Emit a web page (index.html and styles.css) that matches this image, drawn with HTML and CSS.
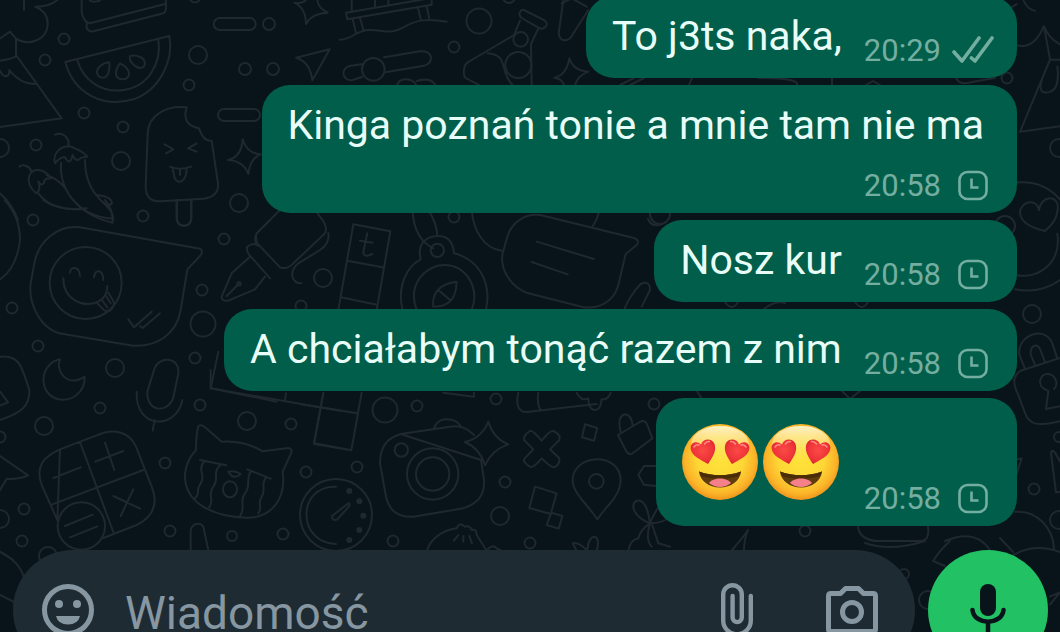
FILE: index.html
```html
<!DOCTYPE html>
<html lang="pl">
<head>
 <meta charset="utf-8">
 <meta name="viewport" content="width=device-width, initial-scale=1">
 <title>Czat</title>
 <link rel="stylesheet" href="styles.css">
</head>
<body>
<svg class="symbols" aria-hidden="true">
  <defs>
	<radialGradient id="face" cx="50%" cy="46%" r="54%">
	  <stop offset="0" stop-color="#ffe23a"/>
	  <stop offset="0.55" stop-color="#fdd835"/>
	  <stop offset="0.85" stop-color="#fbb429"/>
	  <stop offset="1" stop-color="#ee941c"/>
	</radialGradient>
	<linearGradient id="shine" x1="0" y1="0" x2="0" y2="1">
	  <stop offset="0" stop-color="#fff3c8"/>
	  <stop offset="1" stop-color="#ffe680" stop-opacity="0"/>
	</linearGradient>
	<radialGradient id="heart-fill" cx="50%" cy="45%" r="60%">
	  <stop offset="0" stop-color="#fb4a46"/>
	  <stop offset="0.7" stop-color="#ee3338"/>
	  <stop offset="1" stop-color="#cf2430"/>
	</radialGradient>
  </defs>
  <symbol id="clock" viewBox="0 0 42 42">
	<rect x="7.500" y="7" width="27" height="27" rx="8" fill="none" stroke="currentColor" stroke-width="2.600"/>
	<path d="M19.500 13.500v9H26.500" fill="none" stroke="currentColor" stroke-width="2.600"/>
  </symbol>
  <symbol id="ticks" viewBox="0 0 42 42">
	<path d="M2 22l8 9L27 8M19.500 28l3.500 3L40 8" fill="none" stroke="currentColor" stroke-width="3.600" stroke-linejoin="round" stroke-linecap="round"/>
  </symbol>
  <symbol id="heart" viewBox="0 0 26 26">
	<path d="M18 25C11 21 2 17 .8 10.500C-.5 4 6 .5 11 5.500C13 -1 22 -1 24.500 5C27 12 22 19 18 25Z" fill="url(#heart-fill)"/>
	<path d="M4 8q2-3 5-2M14.500 5q2-3 5-2.500" fill="none" stroke="#ff8f85" stroke-width="1.500" stroke-linecap="round"/>
  </symbol>
  <symbol id="heart-eyes" viewBox="0 0 76 76">
	<circle cx="38" cy="38" r="38" fill="url(#face)"/>
	<ellipse cx="38" cy="20" rx="29" ry="18" fill="url(#shine)"/>
	<use href="#heart" x="8" y="15" width="26" height="26"/>
	<use href="#heart" width="26" height="26" transform="translate(68 15) scale(-1 1)"/>
	<path d="M17 47.500Q38 55 59 47.500C58 57 49 63.500 38 63.500S18 57 17 47.500Z" fill="#5f3c0c"/>
	<path d="M17 47.500Q38 55 59 47.500Q58 51 56 52.500Q38 57 20 52.500Q18 51 17 47.500Z" fill="#4a2c06"/>
	<path d="M27 59C31 53 45 53 49 59Q44 63 38 63T27 59Z" fill="#f5808a"/>
  </symbol>
</svg>

<svg class="wallpaper" viewBox="0 0 1060 632" preserveAspectRatio="xMinYMin slice" aria-hidden="true">
  <!-- bubbles scattered between the drawings -->
  <g>
	<circle cx="64" cy="39" r="5.500"/><circle cx="45" cy="60" r="5.500"/><circle cx="84" cy="113" r="5.500"/>
	<circle cx="123" cy="127" r="5.500"/><circle cx="36" cy="145" r="5.500"/><circle cx="189" cy="85" r="5.500"/>
	<circle cx="245" cy="69" r="6"/><circle cx="269" cy="24" r="6"/><circle cx="273" cy="69" r="6"/>
	<circle cx="143" cy="216" r="5.500"/><circle cx="33" cy="220" r="5.500"/><circle cx="195" cy="-3" r="5.500"/>
	<circle cx="121" cy="161" r="9"/><circle cx="198" cy="55" r="9"/><circle cx="239" cy="203" r="9"/><circle cx="0" cy="148" r="9"/>
	<circle cx="479" cy="21" r="12.500"/><circle cx="454" cy="47" r="5.500"/><circle cx="509" cy="-3" r="6"/>
	<circle cx="12" cy="308" r="5.500"/><circle cx="38" cy="346" r="5.500"/><circle cx="115" cy="368" r="9"/>
	<circle cx="195" cy="358" r="5.500"/><circle cx="203" cy="324" r="12.500"/><circle cx="202" cy="290" r="5.500"/>
	<circle cx="224" cy="239" r="5.500"/><circle cx="323" cy="278" r="9"/><circle cx="301" cy="306" r="5.500"/>
	<circle cx="454" cy="217" r="5.500"/><circle cx="660" cy="214" r="10"/>
	<circle cx="100" cy="408" r="5.500"/><circle cx="44" cy="426" r="9"/><circle cx="200" cy="405" r="5.500"/>
	<circle cx="247" cy="421" r="9"/><circle cx="291" cy="424" r="5.500"/><circle cx="165" cy="463" r="5.500"/>
	<circle cx="306" cy="472" r="5.500"/><circle cx="24" cy="509" r="5.500"/><circle cx="22" cy="541" r="5.500"/>
	<circle cx="0" cy="519" r="9"/><circle cx="0" cy="437" r="5.500"/><circle cx="170" cy="531" r="5.500"/>
	<circle cx="232" cy="536" r="5"/><circle cx="283" cy="534" r="5.500"/><circle cx="48" cy="556" r="9"/>
	<circle cx="385" cy="410" r="12.500"/><circle cx="417" cy="406" r="5.500"/><circle cx="357" cy="467" r="5.500"/>
	<circle cx="505" cy="482" r="5.500"/><circle cx="500" cy="516" r="9"/><circle cx="393" cy="541" r="5.500"/>
	<circle cx="496" cy="399" r="5.500"/><circle cx="654" cy="404" r="5.500"/><circle cx="530" cy="543" r="5.500"/>
	<circle cx="1007" cy="78" r="5.500"/><circle cx="1059" cy="148" r="9"/><circle cx="1005" cy="226" r="10"/>
	<circle cx="1032" cy="314" r="9"/><circle cx="1034" cy="489" r="5.500"/><circle cx="1059" cy="437" r="5"/>
	<circle cx="1059" cy="520" r="9"/><circle cx="805" cy="531" r="5.500"/><circle cx="904" cy="574" r="5"/><circle cx="928" cy="600" r="9"/>
  </g>
  <!-- cake, melon, mountain, chillies, ice lolly -->
  <g transform="scale(.33333)">
	<path d="M72 30V0M172 0Q150 20 105 20Q145 35 143 75C140 120 85 140 48 116V165L185 355L0 381M48 116L30 95L0 115M48 170Q25 180 0 182M0 212Q10 232 20 228Q30 225 28 210Q60 252 105 252"/>
	<path d="M245 0V35Q250 68 270 70L495 12Q500 8 497 0M260 68V84Q266 96 280 94L490 40Q500 36 498 12M270 2Q280 8 300 2"/>
	<path d="M196 186L508 108C522 180 480 270 400 298C310 325 220 280 196 186ZM232 180C250 245 310 280 370 270C440 262 486 195 475 118"/>
	<path d="M328 187C330 210 325 232 310 233C290 233 285 213 300 199Q312 188 328 187ZM360 190C382 200 392 218 385 230C376 242 352 240 348 224Q346 208 360 190ZM390 168C385 185 410 208 426 203C440 196 437 178 420 171Q405 164 390 168Z"/>
	<rect x="641" y="54" width="126" height="36" rx="18"/><rect x="654" y="327" width="126" height="36" rx="18"/>
	<path d="M165 404C190 394 210 415 205 440M165 490C155 460 190 425 225 445Q250 455 262 470Q245 470 238 478Q225 485 218 465Q210 500 195 472Q182 468 165 490ZM183 488C178 560 225 650 340 656C340 610 255 600 255 480M58 500C70 490 90 500 95 515M108 580C70 545 85 500 125 512Q145 520 152 535Q132 535 132 548Q125 560 115 545Q125 570 108 580ZM115 580C145 620 200 635 260 625M140 525Q180 540 200 570M290 585Q340 590 335 612Q320 620 308 605"/>
	<path d="M560 322C500 315 445 345 443 400L437 560Q437 604 480 604L610 596Q658 590 654 550L635 422Q610 425 597 385Q555 378 556 340ZM494 433L520 448L498 460M590 430L564 445L590 455M510 500Q540 512 574 500M518 506L524 535C535 555 560 545 560 505M540 508V525M530 604V655Q532 677 552 677T574 655V600"/>
	<path d="M728 418Q740 460 782 463Q750 475 745 522Q730 482 684 480Q725 470 728 418Z"/>
	<path d="M0 580Q35 610 54 660"/>
  </g>
  <!-- pier, paper plane, slider, flask -->
  <g transform="translate(260 0) scale(.33333)">
	<path d="M103 8Q125 12 138 0M103 8Q138 25 138 72Q155 40 203 38Q175 25 172 0M108 173L209 148L157 241Q150 185 108 173Z"/>
	<path d="M258 38L515 -6V14L262 58ZM275 0V32M345 0V20M385 0V12M278 57L288 98M300 53L311 92M474 24L482 57M500 18L508 57M240 119C280 118 285 90 330 90S390 105 430 82S500 55 560 65"/>
	<path d="M372 172L480 154C518 148 525 190 492 197L376 217M306 231L278 240C245 245 240 202 272 197L310 192"/>
	<circle cx="340" cy="208" r="34"/>
	<path d="M410 260Q415 236 440 238T470 260M470 243Q515 230 528 258"/>
	<path d="M792 30L855 62C870 75 850 92 835 83L785 54C770 42 785 25 792 30ZM780 62L762 105L625 186C608 195 608 230 620 236L660 256M835 86L813 132L815 260M683 160C750 165 715 215 760 258"/>
	<circle cx="782" cy="118" r="22"/><circle cx="775" cy="195" r="39"/>
	<path d="M910 0L896 100C900 128 925 125 935 108L985 30M905 10L935 -5L980 20M928 175Q940 212 985 215Q950 228 944 260M928 175Q920 225 883 233Q905 235 912 255"/>
  </g>
  <!-- speech bubble with a grinning face -->
  <g transform="translate(0 200) scale(.33333)">
	<path d="M240 82L600 146Q612 152 600 168L562 208L542 330C530 400 475 440 400 437L190 402C120 390 85 310 92 250L103 190C115 125 170 75 240 82Z"/>
	<circle cx="257" cy="249" r="108"/>
	<path d="M210 218Q212 202 225 204T240 228M282 232Q285 212 297 214T310 240M190 235C190 300 250 325 295 305Q322 290 322 258M290 308L312 330C330 345 350 315 338 300L325 278M306 300L322 322M318 288L332 310M385 358L402 382L455 335M420 378L428 384L480 340"/>
	<path d="M14 0Q60 50 60 120Q50 205 0 238M130 0Q170 30 255 28M220 0Q260 50 338 68Q340 30 315 0M530 0V55Q533 77 552 77T574 55V0"/>
	<path d="M180 478C120 490 110 580 175 598C225 605 255 570 254 530C200 565 165 510 180 478Z"/>
	<path d="M0 470C60 465 65 500 88 570C90 620 60 640 0 660M0 575L24 607L0 617"/>
	<path d="M462 510C475 465 540 470 535 520L520 592C505 640 440 640 442 575ZM410 575C405 690 530 690 547 600M464 660L458 692"/>
	<path d="M810 60L770 100Q762 115 768 130M665 290L695 220L750 170M665 290Q665 305 685 302L765 268L795 230M680 288L716 252M742 140Q735 155 760 178L810 235M742 140Q760 125 775 138"/>
	<path d="M655 455L632 565L830 605"/>
	<circle cx="717" cy="251" r="5"/>
  </g>
  <!-- pen, ladder, compass, note -->
  <g transform="translate(220 210) scale(.33333)">
	<path d="M180 0L110 70Q105 80 112 100L180 172Q200 180 220 160L315 70Q325 50 300 20L285 0M325 70Q330 100 300 120L235 160C205 185 215 220 245 220"/>
	<path d="M400 43L511 64L470 300M400 43L355 300M382 152L487 172M363 262L470 284M442 70L430 125Q430 145 457 132M420 92L458 98"/>
	<path d="M578 0C580 60 600 95 640 115M625 0Q650 40 652 75M548 300C530 230 560 170 602 148C590 100 620 78 655 78S700 105 702 130C780 150 815 220 798 300M590 300C560 220 620 165 672 165C740 165 780 235 755 300M640 290C635 250 660 220 710 215C708 265 690 290 640 290ZM655 240L690 270"/>
	<circle cx="652" cy="121" r="20"/>
	<path d="M755 0C760 60 790 115 845 122M1138 0Q1132 30 1118 48M970 17L1245 85Q1260 92 1250 105L1217 132L1195 225C1180 280 1130 300 1085 290L925 250C865 230 840 170 848 130L862 80C875 35 920 5 970 17ZM950 95L1122 147M935 156L1043 193M1212 300Q1230 255 1262 222Q1290 210 1290 240L1265 290"/>
  </g>
  <!-- calculator, crying cat, stopwatch -->
  <g transform="translate(0 370) scale(.33333)">
	<path d="M180 238L290 196C345 170 390 190 408 230L455 350C475 400 460 440 410 465L310 504M172 450L125 345C105 290 130 260 180 238ZM240 216L340 486M155 404L430 300M160 324L242 292M286 275L370 243M315 218L343 300M340 378L420 416M400 358L362 438M195 468L278 434M210 502L292 469"/>
	<circle cx="244" cy="468" r="71"/>
	<path d="M595 168Q605 162 615 172L665 215Q730 210 788 244L865 234Q878 236 874 248L848 305C860 390 810 445 740 443C640 440 550 400 555 310Q560 270 588 240Q588 195 595 168ZM600 270L678 286M742 298L812 326M612 275C590 305 620 315 602 340S605 365 585 385M660 286C635 310 660 325 640 350S645 385 628 412M752 305C735 330 755 345 735 370S740 410 720 438M798 322C780 345 800 355 785 380S790 410 775 430M685 305Q705 300 722 312Q700 332 685 305Z"/>
	<ellipse cx="690" cy="358" rx="21" ry="24"/>
	<path d="M0 258L84 316Q60 328 20 327L0 360M632 0V55L1020 122M858 70L855 88M970 70L942 222L1020 235M572 545V480C580 455 610 455 612 480L626 545M0 545L40 570"/>
  </g>
  <!-- camera, cross, pin, dumpling -->
  <g transform="translate(300 380) scale(.33333)">
	<circle cx="108" cy="405" r="108"/>
	<path d="M108 320C-10 315 -10 490 108 492M96 408L145 370Q150 370 148 378L112 418Q96 425 96 408ZM0 72L172 100M70 38L42 190L154 211L185 38"/>
	<g class="dots"><circle cx="148" cy="333" r="9"/><circle cx="178" cy="364" r="9"/><circle cx="190" cy="407" r="9"/><circle cx="178" cy="450" r="9"/><circle cx="148" cy="480" r="9"/></g>
	<path d="M302 162L450 140C490 135 505 150 522 165M543 240L552 300C555 350 530 370 490 385L340 410C290 412 268 390 258 350L240 250C240 200 260 175 302 162ZM402 145Q412 118 440 118T482 138M565 125Q580 175 625 193Q575 210 555 256Q540 205 494 186Q545 175 565 125Z"/>
	<circle cx="304" cy="210" r="20"/><circle cx="398" cy="282" r="77"/><circle cx="398" cy="282" r="50"/>
	<path d="M692 152Q700 152 725 182Q750 150 760 153Q785 165 778 180L750 208L778 235Q780 255 762 262Q750 260 725 235Q700 265 690 260Q665 245 674 235L700 208L672 180Q670 165 692 152Z"/>
	<path d="M855 133L892 144L882 182L846 172ZM705 320L770 340L752 402L688 384ZM754 398L787 408L776 446L740 435Z"/>
	<path d="M892 418C860 370 818 340 818 300C820 220 960 215 962 300C960 350 925 370 892 418Z"/><circle cx="889" cy="304" r="22"/>
	<path d="M954 165L1025 123Q1038 122 1042 135L1057 175L995 222Q985 225 978 212ZM962 155Q950 110 975 103Q995 105 998 138M1070 258H1032L1015 285L1032 314L1070 318M655 38C645 80 660 98 680 96L890 72M715 38Q710 70 722 92M830 38Q845 65 865 55Q865 88 883 90T905 58Q925 60 932 38M430 38L522 50V38"/>
	<path d="M380 515C390 475 430 450 470 445Q478 425 495 440Q510 435 515 450Q530 445 530 465L560 512M475 465L462 482M490 468V485M508 468L516 490M560 512Q575 490 590 505L605 512M818 490Q835 485 862 512Q865 470 885 470Q900 480 890 512M818 490L830 512"/>
	<path d="M1050 430C1000 410 990 375 1010 362Q1040 355 1050 430ZM1050 430Q1090 430 1110 410M1050 430Q1070 380 1090 370M1050 430Q1020 450 1015 475Q990 480 985 512M1050 430Q1035 480 1055 500M1055 430L1075 490L1110 500"/>
  </g>
  <!-- right edge: tent, heart, padlock -->
  <g transform="translate(1000 0) scale(.33333 .403)">
	<path d="M70 0Q80 22 105 27M30 20L50 10M50 112Q100 125 132 65Q145 95 180 110M132 65L150 148M180 148H150L60 327L180 313M130 188C110 230 130 232 150 228Q180 220 172 165"/>
	<path d="M52 453Q130 448 180 495M48 682C110 695 185 655 172 580M45 718Q120 730 180 695M135 573Q60 560 60 525C65 500 110 490 117 522C120 485 180 480 173 520Q170 550 135 573Z"/>
	<path d="M180 888L62 920C35 935 40 955 55 980L75 1025C90 1055 110 1058 180 1045M75 915L58 880C50 830 140 805 158 855L172 890M105 905L92 880C90 855 115 850 122 870L135 898M145 970C105 960 120 925 145 928S175 955 162 965M145 970L138 1015L180 1008"/>
	<path d="M48 1140L65 1138L48 1180M180 1145Q155 1105 153 1125L168 1222L180 1220M45 1270C110 1265 160 1310 162 1362M0 1335L40 1370M35 1380Q100 1345 180 1370M150 1480L180 1470L150 1500"/>
  </g>
  <!-- what shows in the narrow strips between messages -->
  <path d="M620 85L634 78M630 85L644 78M689 85L692 78M758 78Q800 78 797 85M832 85V78M866 85L873 81L880 85M956 78Q960 86 972 82L995 78M648 219Q652 228 662 224M725 302Q732 312 738 302M764 309Q775 300 785 303M855 302Q862 312 868 302M697 391L702 399M842 391L850 399L860 391M858 527Q860 541 880 541H920Q930 541 928 527M945 541Q975 528 990 550M732 550Q745 535 748 530Q744 540 744 550M0 552Q20 562 24 578M0 595L14 602M865 543Q890 552 925 541M933 561Q940 550 950 541M933 561L945 566"/>
</svg>

<main class="chat">
  <ul class="messages">
	<li class="bubble">
	  <p class="text">To j3ts naka,</p>
	  <div class="meta"><time>20:29</time><svg class="status" role="img" aria-label="Dostarczono"><use href="#ticks"/></svg></div>
	</li>
	<li class="bubble bubble-long">
	  <p class="text">Kinga poznań tonie a mnie tam nie ma</p>
	  <div class="meta"><time>20:58</time><svg class="status" role="img" aria-label="Oczekuje"><use href="#clock"/></svg></div>
	</li>
	<li class="bubble">
	  <p class="text">Nosz kur</p>
	  <div class="meta"><time>20:58</time><svg class="status" role="img" aria-label="Oczekuje"><use href="#clock"/></svg></div>
	</li>
	<li class="bubble">
	  <p class="text">A chciałabym tonąć razem z nim</p>
	  <div class="meta"><time>20:58</time><svg class="status" role="img" aria-label="Oczekuje"><use href="#clock"/></svg></div>
	</li>
	<li class="bubble">
	  <p class="emojis">
		<svg class="emoji" role="img" aria-label="serduszka w oczach"><use href="#heart-eyes"/></svg>
		<svg class="emoji" role="img" aria-label="serduszka w oczach"><use href="#heart-eyes"/></svg>
	  </p>
	  <div class="meta"><time>20:58</time><svg class="status" role="img" aria-label="Oczekuje"><use href="#clock"/></svg></div>
	</li>
  </ul>

  <form class="composer">
	<div class="field">
	  <button type="button" class="icon-btn" aria-label="Emoji">
		<svg width="52" height="52" viewBox="0 0 52 52">
		  <circle cx="26" cy="26" r="23.500" fill="none" stroke="currentColor" stroke-width="5"/>
		  <circle cx="17" cy="20" r="4" fill="currentColor"/><circle cx="35" cy="20" r="4" fill="currentColor"/>
		  <path d="M14 32H38Q36 40.500 26 40.500T14 32Z" fill="currentColor"/>
		</svg>
	  </button>
	  <input class="input" type="text" placeholder="Wiadomość" aria-label="Wiadomość">
	  <button type="button" class="icon-btn" aria-label="Załącz">
		<svg width="32" height="54" viewBox="0 0 32 54">
		  <path d="M29.800 13V37.500A13.800 13.800 0 0 1 2.200 37.500V11.500A9.300 9.300 0 0 1 20.800 11.500V34.500A4.600 4.600 0 0 1 11.600 34.500V13" fill="none" stroke="currentColor" stroke-width="4.400" stroke-linecap="round"/>
		</svg>
	  </button>
	  <button type="button" class="icon-btn" aria-label="Aparat">
		<svg width="52" height="48" viewBox="0 0 52 48">
		  <path d="M5 7.500H14.500L19.500 2.500H32.500L37.500 7.500H47Q49.500 7.500 49.500 10V43Q49.500 45.500 47 45.500H5Q2.500 45.500 2.500 43V10Q2.500 7.500 5 7.500Z" fill="none" stroke="currentColor" stroke-width="5" stroke-linejoin="round"/>
		  <circle cx="26" cy="26" r="9.500" fill="none" stroke="currentColor" stroke-width="5"/>
		</svg>
	  </button>
	</div>
	<button type="button" class="mic" aria-label="Nagraj wiadomość głosową">
	  <svg width="36" height="54" viewBox="0 0 36 54">
		<rect x="10" y="1" width="16" height="32" rx="8" fill="currentColor"/>
		<path d="M2.500 27C4 42.500 32 42.500 33.500 27M18 39V50" fill="none" stroke="currentColor" stroke-width="4.500" stroke-linecap="round"/>
	  </svg>
	</button>
  </form>
</main>
</body>
</html>
```

FILE: styles.css
```css
*{box-sizing:border-box;}
html,body{height:100%;}
body{margin:0;overflow:hidden;background:#08131a;font-family:Roboto,"Noto Sans",sans-serif;}

.symbols{position:absolute;width:0;height:0;}
.wallpaper{position:absolute;top:0;left:0;width:100%;height:100%;z-index:-1;
	fill:none;stroke:#20282f;stroke-width:2;stroke-linecap:round;stroke-linejoin:round;}
.wallpaper *{vector-effect:non-scaling-stroke;}
.wallpaper .dots{fill:#20282f;stroke:none;}

/* messages */
.messages{display:flex;flex-direction:column;align-items:flex-end;gap:7px;
	list-style:none;margin:-4px 43px 0 12px;padding:0;}
.bubble{display:flex;align-items:flex-end;gap:22px;padding:16px 23px 9px 26px;
	border-radius:28px;background:#005e4b;color:#e9fdf8;}
.bubble-long{flex-direction:column;gap:10px;}
.text{margin:0;padding-bottom:9px;font-size:41px;line-height:48px;}
.bubble-long .text{padding-right:10px;}
.meta{display:flex;align-items:center;gap:11px;font-size:31px;line-height:36px;color:#74aea1;}
.status{width:42px;height:42px;margin:-3px 0;}
.emojis{display:flex;gap:5px;margin:0;padding:10px 3px 17px 0;}
.emoji{width:76px;height:76px;}

/* composer */
.composer{display:flex;align-items:center;gap:13px;margin:24px 12px 0 13px;}
.field{flex:1;display:flex;align-items:center;min-width:0;height:120px;
	padding:0 37px 0 29px;border-radius:60px;background:#1f2b33;color:#8697a1;}
.icon-btn{display:flex;padding:0;border:0;background:none;color:inherit;cursor:pointer;}
.input{flex:1;min-width:0;margin:0 24px 0 31px;padding:6px 0 0;border:0;outline:0;background:none;
	font:46px/56px Roboto,"Noto Sans",sans-serif;color:#e9edef;}
.input::placeholder{color:#8697a1;opacity:1;}
.icon-btn + .icon-btn{margin-left:73px;}
.mic{display:flex;align-items:center;justify-content:center;width:120px;height:120px;
	padding:0;border:0;border-radius:50%;background:#22c163;color:#08131a;cursor:pointer;}
```
